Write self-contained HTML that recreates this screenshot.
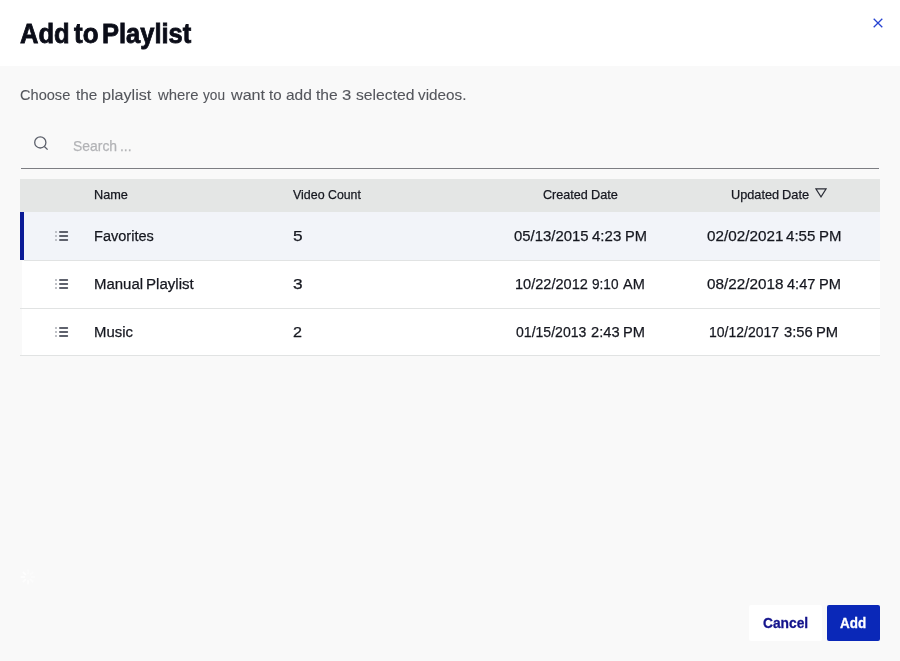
<!DOCTYPE html>
<html>
<head>
<meta charset="utf-8">
<title>Add to Playlist</title>
<style>
*{box-sizing:border-box;margin:0;padding:0}
html,body{width:900px;height:661px;overflow:hidden}
body{font-family:"Liberation Sans",sans-serif;background:#f9f9f9;color:#15171f;position:relative}
div,svg{position:absolute}
.w{position:absolute;white-space:nowrap;line-height:normal;transform-origin:0 0}
.hdr{left:0;top:0;width:900px;height:66px;background:#fff}
.uline{left:21px;top:168px;width:858px;height:1px;background:#7d7e83}
.th{left:20px;top:179px;width:860px;height:33px;background:#e4e6e5}
.rw{left:22px;width:858px;background:#fff}
.bd{left:20px;width:860px;height:1px;background:#e1e3e3}
.bar{left:20px;top:212px;width:4px;height:48px;background:#0a1a96}
.li{left:55px;width:14px;height:10px}
.btn{top:605px;height:36px;border-radius:2px}
</style>
</head>
<body>
<div class="hdr"></div>
<svg style="left:871px;top:16px;width:14px;height:14px" viewBox="0 0 14 14"><path d="M2.7 2.7 L11.3 11.3 M11.3 2.7 L2.7 11.3" stroke="#2643d2" stroke-width="1.3" fill="none"/></svg>
<svg style="left:32px;top:134px;width:18px;height:18px" viewBox="0 0 18 18"><circle cx="8.3" cy="8.4" r="5.6" stroke="#5b5f6a" stroke-width="1.3" fill="none"/><path d="M12.4 12.5 L15.6 15.6" stroke="#5b5f6a" stroke-width="1.3" fill="none"/></svg>
<div class="uline"></div>
<div class="th"></div>
<svg style="left:815px;top:188px;width:12px;height:10px" viewBox="0 0 12 10"><path d="M0.9 0.9 L11.1 0.9 L6 8.9 Z" stroke="#2a2d36" stroke-width="1.1" fill="none"/></svg>
<div class="rw" style="top:212px;height:48px;background:#f2f4f9"></div>
<div class="bar"></div>
<div class="bd" style="top:260px;left:24px;width:856px"></div>
<div class="rw" style="top:261px;height:47px"></div>
<div class="bd" style="top:308px"></div>
<div class="rw" style="top:309px;height:46px"></div>
<div class="bd" style="top:355px"></div>
<svg class="li" style="top:231px" viewBox="0 0 14 10"><path d="M0.1 1h1.8M0.1 5h1.8M0.1 9h1.8" stroke="#b9bbc1" stroke-width="1.9"/><g fill="#5f626d"><rect x="4.1" y="0.05" width="9" height="1.9" rx="0.7"/><rect x="4.1" y="4.05" width="9" height="1.9" rx="0.7"/><rect x="4.1" y="8.05" width="9" height="1.9" rx="0.7"/></g></svg>
<svg class="li" style="top:279px" viewBox="0 0 14 10"><path d="M0.1 1h1.8M0.1 5h1.8M0.1 9h1.8" stroke="#b9bbc1" stroke-width="1.9"/><g fill="#5f626d"><rect x="4.1" y="0.05" width="9" height="1.9" rx="0.7"/><rect x="4.1" y="4.05" width="9" height="1.9" rx="0.7"/><rect x="4.1" y="8.05" width="9" height="1.9" rx="0.7"/></g></svg>
<svg class="li" style="top:327px" viewBox="0 0 14 10"><path d="M0.1 1h1.8M0.1 5h1.8M0.1 9h1.8" stroke="#b9bbc1" stroke-width="1.9"/><g fill="#5f626d"><rect x="4.1" y="0.05" width="9" height="1.9" rx="0.7"/><rect x="4.1" y="4.05" width="9" height="1.9" rx="0.7"/><rect x="4.1" y="8.05" width="9" height="1.9" rx="0.7"/></g></svg>
<svg style="left:20px;top:569px;width:16px;height:16px" viewBox="-8 -8 16 16"><g stroke="#ffffff" stroke-width="1.6" stroke-linecap="round"><path d="M0 -3.6V-6.6" transform="rotate(0)" opacity="0.35"/><path d="M0 -3.6V-6.6" transform="rotate(45)" opacity="0.43"/><path d="M0 -3.6V-6.6" transform="rotate(90)" opacity="0.51"/><path d="M0 -3.6V-6.6" transform="rotate(135)" opacity="0.59"/><path d="M0 -3.6V-6.6" transform="rotate(180)" opacity="0.67"/><path d="M0 -3.6V-6.6" transform="rotate(225)" opacity="0.75"/><path d="M0 -3.6V-6.6" transform="rotate(270)" opacity="0.83"/><path d="M0 -3.6V-6.6" transform="rotate(315)" opacity="0.91"/></g></svg>
<div class="btn" style="left:749px;width:73px;background:#fff"></div>
<div class="btn" style="left:827px;width:53px;background:#0a28b8"></div>
<div style="left:0;top:0;width:900px;height:661px;will-change:transform">
<span class="w" style="left:20.38px;top:18.700000000000003px;font-size:27px;color:#0b0d18;transform:scaleX(0.9442);font-weight:bold;-webkit-text-stroke:0.8px #0b0d18">Add</span>
<span class="w" style="left:73.58px;top:18.700000000000003px;font-size:27px;color:#0b0d18;transform:scaleX(0.9616);font-weight:bold;-webkit-text-stroke:0.8px #0b0d18">to</span>
<span class="w" style="left:102.43px;top:18.700000000000003px;font-size:27px;color:#0b0d18;transform:scaleX(0.9432);font-weight:bold;-webkit-text-stroke:0.8px #0b0d18">Playlist</span>
<span class="w" style="left:20.05px;top:86px;font-size:15px;color:#54565c;transform:scaleX(0.9716);-webkit-text-stroke:0.1px #54565c">Choose</span>
<span class="w" style="left:75.85px;top:86px;font-size:15px;color:#54565c;transform:scaleX(1.0189);-webkit-text-stroke:0.1px #54565c">the</span>
<span class="w" style="left:101.95px;top:86px;font-size:15px;color:#54565c;transform:scaleX(1.0752);-webkit-text-stroke:0.1px #54565c">playlist</span>
<span class="w" style="left:158.34px;top:86px;font-size:15px;color:#54565c;transform:scaleX(0.9901);-webkit-text-stroke:0.1px #54565c">where</span>
<span class="w" style="left:202.85px;top:86px;font-size:15px;color:#54565c;transform:scaleX(0.9105);-webkit-text-stroke:0.1px #54565c">you</span>
<span class="w" style="left:230.63px;top:86px;font-size:15px;color:#54565c;transform:scaleX(1.0739);-webkit-text-stroke:0.1px #54565c">want</span>
<span class="w" style="left:268.65px;top:86px;font-size:15px;color:#54565c;transform:scaleX(1.0027);-webkit-text-stroke:0.1px #54565c">to</span>
<span class="w" style="left:286.05px;top:86px;font-size:15px;color:#54565c;transform:scaleX(1.0329);-webkit-text-stroke:0.1px #54565c">add</span>
<span class="w" style="left:316.25px;top:86px;font-size:15px;color:#54565c;transform:scaleX(1.0383);-webkit-text-stroke:0.1px #54565c">the</span>
<span class="w" style="left:342.26px;top:86px;font-size:15px;color:#54565c;transform:scaleX(1.1111);-webkit-text-stroke:0.1px #54565c">3</span>
<span class="w" style="left:355.55px;top:86px;font-size:15px;color:#54565c;transform:scaleX(1.0481);-webkit-text-stroke:0.1px #54565c">selected</span>
<span class="w" style="left:418.45px;top:86px;font-size:15px;color:#54565c;transform:scaleX(1.0181);-webkit-text-stroke:0.1px #54565c">videos.</span>
<span class="w" style="left:73.12px;top:137px;font-size:15px;color:#b2b3b6;transform:scaleX(0.9276);-webkit-text-stroke:0.25px #b2b3b6">Search</span>
<span class="w" style="left:119.69px;top:137px;font-size:15px;color:#b2b3b6;transform:scaleX(0.9258);-webkit-text-stroke:0.25px #b2b3b6">...</span>
<span class="w" style="left:93.67px;top:187px;font-size:13.4px;color:#15171f;transform:scaleX(0.9501);-webkit-text-stroke:0.25px #15171f">Name</span>
<span class="w" style="left:293.42px;top:187px;font-size:13.4px;color:#15171f;transform:scaleX(0.9288);-webkit-text-stroke:0.25px #15171f">Video</span>
<span class="w" style="left:328.11px;top:187px;font-size:13.4px;color:#15171f;transform:scaleX(0.9183);-webkit-text-stroke:0.25px #15171f">Count</span>
<span class="w" style="left:543.12px;top:187px;font-size:13.4px;color:#15171f;transform:scaleX(0.9401);-webkit-text-stroke:0.25px #15171f">Created</span>
<span class="w" style="left:590.77px;top:187px;font-size:13.4px;color:#15171f;transform:scaleX(0.9525);-webkit-text-stroke:0.25px #15171f">Date</span>
<span class="w" style="left:730.87px;top:187px;font-size:13.4px;color:#15171f;transform:scaleX(0.9508);-webkit-text-stroke:0.25px #15171f">Updated</span>
<span class="w" style="left:781.86px;top:187px;font-size:13.4px;color:#15171f;transform:scaleX(0.9598);-webkit-text-stroke:0.25px #15171f">Date</span>
<span class="w" style="left:93.78px;top:226.7px;font-size:15.5px;color:#15171f;transform:scaleX(0.9377);-webkit-text-stroke:0.25px #15171f">Favorites</span>
<span class="w" style="left:93.76px;top:274.7px;font-size:15.5px;color:#15171f;transform:scaleX(0.9649);-webkit-text-stroke:0.25px #15171f">Manual</span>
<span class="w" style="left:145.75px;top:274.7px;font-size:15.5px;color:#15171f;transform:scaleX(0.9727);-webkit-text-stroke:0.25px #15171f">Playlist</span>
<span class="w" style="left:93.96px;top:322.7px;font-size:15.5px;color:#15171f;transform:scaleX(0.9606);-webkit-text-stroke:0.25px #15171f">Music</span>
<span class="w" style="left:292.84px;top:226.7px;font-size:15.5px;color:#15171f;transform:scaleX(1.1152);-webkit-text-stroke:0.25px #15171f">5</span>
<span class="w" style="left:292.84px;top:274.7px;font-size:15.5px;color:#15171f;transform:scaleX(1.1152);-webkit-text-stroke:0.25px #15171f">3</span>
<span class="w" style="left:293.03px;top:322.7px;font-size:15.5px;color:#15171f;transform:scaleX(1.0424);-webkit-text-stroke:0.25px #15171f">2</span>
<span class="w" style="left:513.72px;top:226.7px;font-size:15.5px;color:#15171f;transform:scaleX(0.9624);-webkit-text-stroke:0.25px #15171f">05/13/2015</span>
<span class="w" style="left:592.32px;top:226.7px;font-size:15.5px;color:#15171f;transform:scaleX(0.9699);-webkit-text-stroke:0.25px #15171f">4:23</span>
<span class="w" style="left:624.77px;top:226.7px;font-size:15.5px;color:#15171f;transform:scaleX(0.9450);-webkit-text-stroke:0.25px #15171f">PM</span>
<span class="w" style="left:706.52px;top:226.7px;font-size:15.5px;color:#15171f;transform:scaleX(0.9844);-webkit-text-stroke:0.25px #15171f">02/02/2021</span>
<span class="w" style="left:786.12px;top:226.7px;font-size:15.5px;color:#15171f;transform:scaleX(0.9732);-webkit-text-stroke:0.25px #15171f">4:55</span>
<span class="w" style="left:818.76px;top:226.7px;font-size:15.5px;color:#15171f;transform:scaleX(0.9635);-webkit-text-stroke:0.25px #15171f">PM</span>
<span class="w" style="left:515.18px;top:274.7px;font-size:15.5px;color:#15171f;transform:scaleX(0.9396);-webkit-text-stroke:0.25px #15171f">10/22/2012</span>
<span class="w" style="left:592.11px;top:274.7px;font-size:15.5px;color:#15171f;transform:scaleX(0.8767);-webkit-text-stroke:0.25px #15171f">9:10</span>
<span class="w" style="left:622.52px;top:274.7px;font-size:15.5px;color:#15171f;transform:scaleX(0.9385);-webkit-text-stroke:0.25px #15171f">AM</span>
<span class="w" style="left:706.52px;top:274.7px;font-size:15.5px;color:#15171f;transform:scaleX(0.9844);-webkit-text-stroke:0.25px #15171f">08/22/2018</span>
<span class="w" style="left:787.12px;top:274.7px;font-size:15.5px;color:#15171f;transform:scaleX(0.9397);-webkit-text-stroke:0.25px #15171f">4:47</span>
<span class="w" style="left:819.17px;top:274.7px;font-size:15.5px;color:#15171f;transform:scaleX(0.9450);-webkit-text-stroke:0.25px #15171f">PM</span>
<span class="w" style="left:516.11px;top:322.7px;font-size:15.5px;color:#15171f;transform:scaleX(0.9067);-webkit-text-stroke:0.25px #15171f">01/15/2013</span>
<span class="w" style="left:591.02px;top:322.7px;font-size:15.5px;color:#15171f;transform:scaleX(0.9464);-webkit-text-stroke:0.25px #15171f">2:43</span>
<span class="w" style="left:622.77px;top:322.7px;font-size:15.5px;color:#15171f;transform:scaleX(0.9450);-webkit-text-stroke:0.25px #15171f">PM</span>
<span class="w" style="left:708.81px;top:322.7px;font-size:15.5px;color:#15171f;transform:scaleX(0.9028);-webkit-text-stroke:0.25px #15171f">10/12/2017</span>
<span class="w" style="left:783.72px;top:322.7px;font-size:15.5px;color:#15171f;transform:scaleX(0.9531);-webkit-text-stroke:0.25px #15171f">3:56</span>
<span class="w" style="left:816.17px;top:322.7px;font-size:15.5px;color:#15171f;transform:scaleX(0.9542);-webkit-text-stroke:0.25px #15171f">PM</span>
<span class="w" style="left:762.94px;top:614px;font-size:15px;color:#14148c;transform:scaleX(0.9185);font-weight:bold;-webkit-text-stroke:0.3px #14148c">Cancel</span>
<span class="w" style="left:840.03px;top:614px;font-size:15px;color:#ffffff;transform:scaleX(0.8978);font-weight:bold;-webkit-text-stroke:0.3px #ffffff">Add</span>
</div>
</body>
</html>
